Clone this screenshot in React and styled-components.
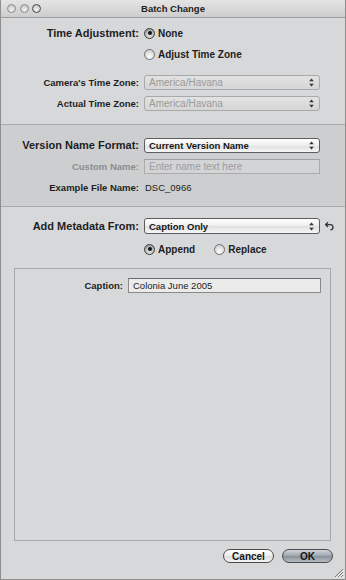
import React from 'react';
import styled, { createGlobalStyle } from 'styled-components';

const GlobalStyle = createGlobalStyle`
  html, body {
    margin: 0;
    padding: 0;
    background: #d7d8da;
  }
  * {
    box-sizing: border-box;
  }
`;

const Window = styled.div`
  width: 346px;
  height: 580px;
  display: flex;
  flex-direction: column;
  position: relative;
  border: 1px solid #8e8e8e;
  border-top: none;
  background: #d7d8da;
  font-family: "Liberation Sans", Arial, sans-serif;
  color: #1a1a1a;
  overflow: hidden;
`;

const TitleBar = styled.div`
  height: 18px;
  flex: none;
  display: flex;
  align-items: center;
  justify-content: center;
  position: relative;
  background: linear-gradient(#e4e4e4, #cdcdcd);
  border-bottom: 1px solid #9d9d9d;
`;

const Lights = styled.div`
  position: absolute;
  left: 6px;
  top: 4px;
  display: flex;
  gap: 3.5px;
`;

const Light = styled.span`
  width: 9px;
  height: 9px;
  border-radius: 50%;
  border: 1px solid ${p => (p.$dark ? '#4a4a4a' : '#8d8d8d')};
  background: radial-gradient(circle at 50% 70%, #f4f4f4, #b9b9b9);
`;

const Title = styled.div`
  font-size: 9.5px;
  font-weight: bold;
  color: #222;
`;

const Section = styled.div`
  display: flex;
  flex-direction: column;
  gap: 5px;
  padding: ${p => p.$pad};
  background: ${p => (p.$shade ? '#cdced0' : 'transparent')};
  border-bottom: ${p => (p.$line ? '1px solid #a9aaac' : 'none')};
`;

const Row = styled.div`
  display: grid;
  grid-template-columns: 138px 176px auto;
  column-gap: 5px;
  align-items: center;
  height: 16px;
  margin-top: ${p => p.$mt || 0}px;
`;

const Label = styled.div`
  text-align: right;
  font-weight: bold;
  font-size: ${p => (p.$big ? '11px' : '9.5px')};
  color: ${p => (p.$dim ? '#8c8c8c' : '#1e1e1e')};
  white-space: nowrap;
`;

const Popup = styled.div`
  height: ${p => p.$h || 15}px;
  border-radius: 3px;
  border: 1px solid ${p => (p.$disabled ? '#a9a9a9' : '#5d5d5d')};
  background: ${p =>
    p.$disabled
      ? 'linear-gradient(#e2e2e2, #d6d6d6)'
      : 'linear-gradient(#ffffff, #eeeeee 50%, #e0e0e0 52%, #f6f6f6)'};
  display: flex;
  align-items: center;
  justify-content: space-between;
  padding: 0 5px 0 4px;
  font-size: ${p => (p.$disabled ? '10px' : '9.5px')};
  font-weight: ${p => (p.$disabled ? 'normal' : 'bold')};
  color: ${p => (p.$disabled ? '#9a9a9a' : '#151515')};
  white-space: nowrap;
`;

const Field = styled.div`
  height: 15px;
  border: 1px solid ${p => (p.$disabled ? '#ababab' : '#8a8a8a')};
  border-top-color: ${p => (p.$disabled ? '#a0a0a0' : '#6c6c6c')};
  background: ${p => (p.$disabled ? '#d3d4d6' : '#ebebeb')};
  display: flex;
  align-items: center;
  padding: 0 4px;
  font-size: ${p => (p.$disabled ? '10px' : '9.5px')};
  color: ${p => (p.$disabled ? '#9c9c9c' : '#222')};
  white-space: nowrap;
`;

const Value = styled.div`
  font-size: 9.5px;
  color: #1e1e1e;
  padding-left: 1px;
`;

const RadioGroup = styled.div`
  display: flex;
  align-items: center;
  gap: 19px;
`;

const RadioItem = styled.div`
  display: flex;
  align-items: center;
  gap: 3px;
  font-size: 10px;
  font-weight: bold;
  color: #1e1e1e;
  white-space: nowrap;
`;

const RadioCircle = styled.span`
  width: 11px;
  height: 11px;
  border-radius: 50%;
  flex: none;
  display: flex;
  align-items: center;
  justify-content: center;
  border: 1px solid ${p => (p.$on ? '#3c3c3c' : '#6f6f6f')};
  background: ${p =>
    p.$on
      ? 'radial-gradient(circle at 50% 75%, #e6e6e6, #8e8e8e)'
      : 'radial-gradient(circle at 50% 75%, #ffffff, #c4c4c4)'};
  &::after {
    content: '';
    display: ${p => (p.$on ? 'block' : 'none')};
    width: 4px;
    height: 4px;
    border-radius: 50%;
    background: #111;
  }
`;

const InnerBox = styled.div`
  flex: 1;
  margin: 11px 14px 0 13px;
  border: 1px solid #a6a7a9;
  padding-top: 8px;
`;

const CaptionRow = styled.div`
  display: grid;
  grid-template-columns: 108px 193px;
  column-gap: 5px;
  align-items: center;
  height: 16px;
`;

const Footer = styled.div`
  height: 38px;
  flex: none;
  display: flex;
  justify-content: flex-end;
  align-items: flex-start;
  gap: 8px;
  padding: 8px 12px 0 0;
`;

const Button = styled.div`
  width: 51px;
  height: 14px;
  border-radius: 8px;
  border: 1px solid #4a4a4a;
  background: ${p =>
    p.$primary
      ? 'linear-gradient(#d2d7dc, #9ba3ac 50%, #88919b 52%, #b4bbc2)'
      : 'linear-gradient(#ffffff, #ececec 50%, #dcdcdc 52%, #f5f5f5)'};
  display: flex;
  align-items: center;
  justify-content: center;
  font-size: 10px;
  font-weight: bold;
  color: #151515;
`;

const Grip = styled.svg`
  position: absolute;
  right: 1px;
  bottom: 1px;
`;

const Arrows = () => (
  <svg width="5" height="9" viewBox="0 0 5 9">
    <path d="M2.5 0.5 L4.8 3.3 L0.2 3.3 Z" fill="#333" />
    <path d="M2.5 8.5 L4.8 5.7 L0.2 5.7 Z" fill="#333" />
  </svg>
);

const UndoIcon = () => (
  <svg width="9" height="10" viewBox="0 0 9 10">
    <path
      d="M3 1.2 L0.6 3.6 L3 6 M0.9 3.6 H5 C7 3.6 8 4.8 8 6.3 C8 7.8 7 8.8 5.4 8.8"
      fill="none"
      stroke="#333"
      strokeWidth="1.3"
    />
  </svg>
);

const Radio = ({ on, children }) => (
  <RadioItem>
    <RadioCircle $on={on} />
    {children}
  </RadioItem>
);

const App = () => {
  return (
    <>
      <GlobalStyle />
      <Window>
        <TitleBar>
          <Lights>
            <Light />
            <Light />
            <Light $dark />
          </Lights>
          <Title>Batch Change</Title>
        </TitleBar>

        <Section $pad="7px 0 13px" $line>
          <Row>
            <Label $big>Time Adjustment:</Label>
            <Radio on>None</Radio>
          </Row>
          <Row>
            <span />
            <Radio>Adjust Time Zone</Radio>
          </Row>
          <Row $mt={7}>
            <Label>Camera's Time Zone:</Label>
            <Popup $disabled>
              America/Havana
              <Arrows />
            </Popup>
          </Row>
          <Row>
            <Label>Actual Time Zone:</Label>
            <Popup $disabled>
              America/Havana
              <Arrows />
            </Popup>
          </Row>
        </Section>

        <Section $pad="12px 0 11px" $shade $line>
          <Row>
            <Label $big>Version Name Format:</Label>
            <Popup>
              Current Version Name
              <Arrows />
            </Popup>
          </Row>
          <Row>
            <Label $dim>Custom Name:</Label>
            <Field $disabled>Enter name text here</Field>
          </Row>
          <Row>
            <Label>Example File Name:</Label>
            <Value>DSC_0966</Value>
          </Row>
        </Section>

        <Section $pad="11px 0 0">
          <Row>
            <Label $big>Add Metadata From:</Label>
            <Popup $h={16}>
              Caption Only
              <Arrows />
            </Popup>
            <UndoIcon />
          </Row>
          <Row $mt={2}>
            <span />
            <RadioGroup>
              <Radio on>Append</Radio>
              <Radio>Replace</Radio>
            </RadioGroup>
          </Row>
        </Section>

        <InnerBox>
          <CaptionRow>
            <Label>Caption:</Label>
            <Field>Colonia June 2005</Field>
          </CaptionRow>
        </InnerBox>

        <Footer>
          <Button>Cancel</Button>
          <Button $primary>OK</Button>
        </Footer>

        <Grip width="11" height="11" viewBox="0 0 11 11">
          <path d="M10 2 L2 10 M10 5 L5 10 M10 8 L8 10" stroke="#7a7a7a" strokeWidth="1" />
          <path d="M11 3 L3 11 M11 6 L6 11 M11 9 L9 11" stroke="#f2f2f2" strokeWidth="1" />
        </Grip>
      </Window>
    </>
  );
};

export default App;
